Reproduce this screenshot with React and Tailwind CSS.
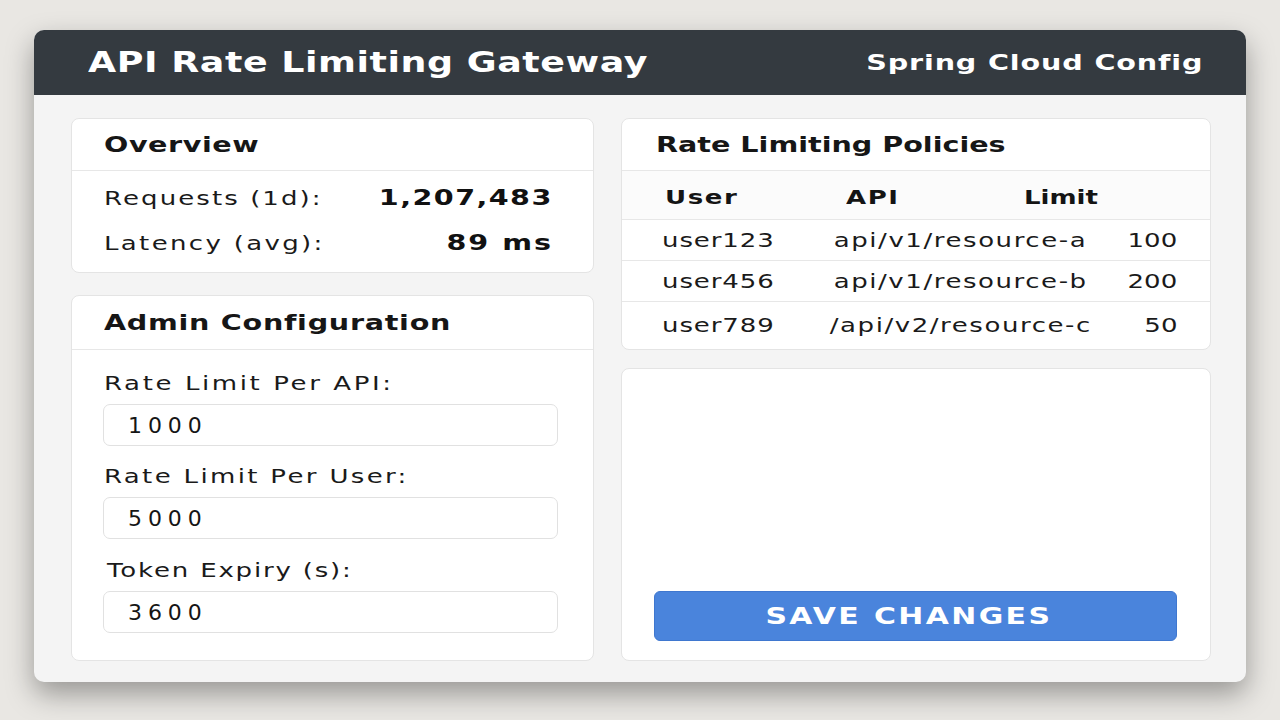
import React from "react";

const font = "font-['DejaVu_Sans','Liberation_Sans',sans-serif]";

function T({ children, className = "", origin = "origin-left" }) {
  return (
    <span className={`inline-block whitespace-nowrap scale-x-[1.3] ${origin} ${className}`}>{children}</span>
  );
}

function CardHeader({ title, h, tracking, pl = "pl-[32px]" }) {
  return (
    <div className={`flex items-center border-b border-[#e7e7e7] ${pl} ${h}`}>
      <T className={`text-[22px] font-bold leading-none text-[#161616] ${tracking}`}>{title}</T>
    </div>
  );
}

function Field({ label, value, labelTracking, mt, labelPl = "pl-0" }) {
  return (
    <div className={`flex flex-col ${mt}`}>
      <div className={`flex h-[28px] items-center ${labelPl}`}>
        <T className={`text-[20px] leading-none text-[#1a1a1a] ${labelTracking}`}>{label}</T>
      </div>
      <input
        readOnly
        defaultValue={value}
        className={`${font} mt-[7px] h-[42px] w-full rounded-[7px] border border-[#e1e1e1] bg-white pl-[24px] text-[22px] tracking-[0.27em] text-[#151515] outline-none`}
      />
    </div>
  );
}

const rows = [
  { user: "user123", api: "api/v1/resource-a", limit: "100", h: "h-[41px]", border: true },
  { user: "user456", api: "api/v1/resource-b", limit: "200", h: "h-[41px]", border: true },
  { user: "user789", api: "/api/v2/resource-c", limit: "50", h: "h-[45px]", border: false },
];

export default function App() {
  return (
    <div className={`${font} h-[720px] w-[1280px] overflow-hidden bg-[#e9e7e3] px-[34px] pt-[30px]`}>
      <div className="flex h-[652px] flex-col overflow-hidden rounded-[10px] bg-[#f4f4f4] shadow-[0_12px_28px_rgba(0,0,0,0.35)]">
        {/* Header */}
        <div className="flex h-[65px] shrink-0 items-center justify-between bg-[#343a40] pl-[54px] pr-[43px]">
          <T className="text-[28px] font-bold leading-none tracking-[0.015em] text-white">API Rate Limiting Gateway</T>
          <T origin="origin-right" className="text-[22px] font-bold leading-none tracking-[0.03em] text-white">Spring Cloud Config</T>
        </div>

        {/* Body */}
        <div className="flex flex-1 gap-[27px] pl-[37px] pr-[35px] pt-[23px] pb-[21px]">
          {/* Left column */}
          <div className="flex w-[523px] flex-col gap-[22px]">
            {/* Overview */}
            <div className="h-[155px] rounded-[8px] border border-[#e4e4e4] bg-white">
              <CardHeader title="Overview" h="h-[52px]" tracking="tracking-[0.02em]" />
              <div className="flex flex-col gap-[15px] pl-[32px] pr-[40px] pt-[12px]">
                <div className="flex h-[30px] items-center justify-between">
                  <T className="text-[20px] leading-none tracking-[0.08em] text-[#1a1a1a]">Requests (1d):</T>
                  <T origin="origin-right" className="text-[22px] font-bold leading-none tracking-[0.05em] text-[#111]">1,207,483</T>
                </div>
                <div className="flex h-[30px] items-center justify-between">
                  <T className="text-[20px] leading-none tracking-[0.09em] text-[#1a1a1a]">Latency (avg):</T>
                  <T origin="origin-right" className="text-[22px] font-bold leading-none tracking-[0.07em] text-[#111]">89 ms</T>
                </div>
              </div>
            </div>

            {/* Admin Configuration */}
            <div className="h-[366px] rounded-[8px] border border-[#e4e4e4] bg-white">
              <CardHeader title="Admin Configuration" h="h-[54px]" tracking="tracking-[0.025em]" />
              <div className="flex flex-col pl-[31px] pr-[35px] pt-[19px]">
                <Field label="Rate Limit Per API:" value="1000" labelTracking="tracking-[0.1em]" mt="mt-0" labelPl="pl-[1px]" />
                <Field label="Rate Limit Per User:" value="5000" labelTracking="tracking-[0.09em]" mt="mt-[16px]" labelPl="pl-[1px]" />
                <Field label="Token Expiry (s):" value="3600" labelTracking="tracking-[0.07em]" mt="mt-[17px]" labelPl="pl-[4px]" />
              </div>
            </div>
          </div>

          {/* Right column */}
          <div className="flex flex-1 flex-col gap-[18px]">
            {/* Policies table */}
            <div className="h-[232px] overflow-hidden rounded-[8px] border border-[#e4e4e4] bg-white">
              <CardHeader title="Rate Limiting Policies" h="h-[52px]" tracking="tracking-[0em]" pl="pl-[34px]" />
              <div className="flex h-[49px] items-center border-b border-[#e7e7e7] bg-[#fbfbfb] pl-[43px] pt-[4px] text-[20px] font-bold leading-none text-[#141414]">
                <span className="w-[181px]"><T className="tracking-[0.06em]">User</T></span>
                <span className="w-[178px]"><T className="tracking-[0.06em]">API</T></span>
                <T className="tracking-[0em]">Limit</T>
              </div>
              {rows.map((r) => (
                <div
                  key={r.user}
                  className={`flex items-center pl-[40px] pr-[33px] text-[20px] leading-none text-[#1a1a1a] ${r.h} ${r.border ? "border-b border-[#e7e7e7]" : ""}`}
                >
                  <span className="w-[150px]"><T className="tracking-[0.035em]">{r.user}</T></span>
                  <span className="flex-1 text-center"><T origin="origin-center" className="tracking-[0.06em]">{r.api}</T></span>
                  <span className="w-[68px] text-right"><T origin="origin-right" className="tracking-[0em]">{r.limit}</T></span>
                </div>
              ))}
            </div>

            {/* Actions card */}
            <div className="flex flex-1 flex-col justify-end rounded-[8px] border border-[#e4e4e4] bg-white pb-[19px] pl-[32px] pr-[33px]">
              <button className={`${font} flex h-[50px] w-full items-center justify-center rounded-[6px] border border-[#3f77cf] bg-[#4a84dc] text-white`}>
                <T origin="origin-center" className="pr-[10px] text-[23px] font-bold leading-none tracking-[0.08em]">SAVE CHANGES</T>
              </button>
            </div>
          </div>
        </div>
      </div>
    </div>
  );
}
